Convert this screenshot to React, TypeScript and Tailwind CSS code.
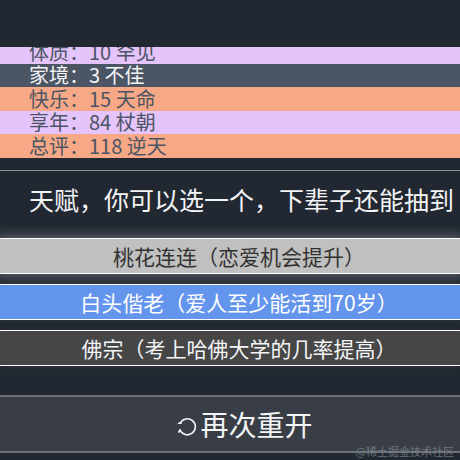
import React from "react";

const stats = [
  { label: "体质：10 罕见", cls: "bg-[#e5c3fb] text-[#4b5563]" },
  { label: "家境：3 不佳", cls: "bg-[#4b5563] text-[#f3f4f6]" },
  { label: "快乐：15 天命", cls: "bg-[#f7a886] text-[#4b5563]" },
  { label: "享年：84 杖朝", cls: "bg-[#e5c3fb] text-[#4b5563]" },
  { label: "总评：118 逆天", cls: "bg-[#f7a886] text-[#4b5563]" },
];

const talents = [
  {
    text: "桃花连连（恋爱机会提升）",
    cls: "bg-[#c0c0c0] text-[#333333] shadow-[0_0_10px_3px_rgba(140,145,152,0.55)]",
  },
  {
    text: "白头偕老（爱人至少能活到70岁）",
    cls: "bg-[#6495ed] text-white shadow-[0_0_6px_1px_rgba(60,66,74,0.5)]",
  },
  {
    text: "佛宗（考上哈佛大学的几率提高）",
    cls: "bg-[#464646] text-[#f3f4f6] shadow-[0_0_6px_1px_rgba(60,66,74,0.4)]",
  },
];

const RestartIcon = () => (
  <svg width="20" height="20" viewBox="0 0 20 20" fill="none" className="mr-[3px] mt-[5px]">
    <path
      d="M3.2 6.2 A8 8 0 1 1 3 13"
      stroke="#f3f4f6"
      strokeWidth="1.6"
      strokeLinecap="round"
    />
    <path d="M1.6 6.2 H4" stroke="#f3f4f6" strokeWidth="1.6" strokeLinecap="round" />
    <path d="M3 13 L1.8 15.2" stroke="#f3f4f6" strokeWidth="1.6" strokeLinecap="round" />
  </svg>
);

export default function App() {
  return (
    <div className="relative w-[460px] h-[460px] overflow-hidden bg-[#222831] font-['Noto_Sans_CJK_SC','Noto_Sans',sans-serif]">
      {/* stats list, scrolled */}
      <div className="h-[47px]" />
      <div className="h-[110.5px] overflow-hidden">
        <div className="-mt-[7px] flex flex-col">
          {stats.map((s) => (
            <div
              key={s.label}
              className={`h-[23.5px] flex items-center pl-[29px] text-[20px] leading-none ${s.cls}`}
            >
              {s.label}
            </div>
          ))}
        </div>
      </div>
      <div className="h-[12.5px]" />
      <div className="h-px bg-[#8e9299]" />

      {/* talents */}
      <div className="h-[57px] flex items-center pl-[29px] text-[25px] text-[#f3f4f6] leading-none whitespace-nowrap">
        天赋，你可以选一个，下辈子还能抽到
      </div>
      <div className="h-[10px]" />
      <div className="flex flex-col gap-[10px]">
        {talents.map((t) => (
          <div
            key={t.text}
            className={`h-[36px] border-y border-white flex items-center justify-center pl-[18px] text-[21px] leading-none ${t.cls}`}
          >
            {t.text}
          </div>
        ))}
      </div>

      <div className="h-[29px]" />
      <div className="h-[58px] bg-[#393e46] border-y-2 border-[#6b7079] flex items-center justify-center pl-[30px] text-[28px] text-[#f3f4f6] leading-none">
        <RestartIcon />
        再次重开
      </div>

      <div className="absolute right-[6px] bottom-[1px] text-[11px] text-[#7d828a] opacity-80">
        @稀土掘金技术社区
      </div>
    </div>
  );
}
